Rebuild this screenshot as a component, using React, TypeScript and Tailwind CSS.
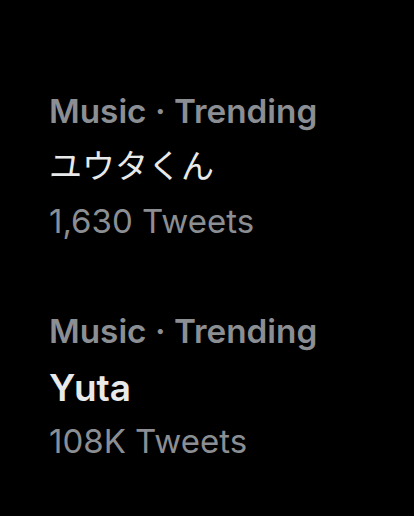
export default function App() {
  const trends = [
    { label: "Music · Trending", title: "ユウタくん", count: "1,630 Tweets", jp: true },
    { label: "Music · Trending", title: "Yuta", count: "108K Tweets", jp: false },
  ];

  return (
    <div className="h-[516px] w-[414px] overflow-hidden bg-black pl-[49px] pt-[84px] font-['Inter','Noto_Sans_CJK_JP',sans-serif]">
      <div className="flex flex-col gap-[55px]">
        {trends.map((t) => (
          <div key={t.title} className="flex flex-col">
            <p className="h-[55px] text-[33.3px] leading-[55px] font-semibold text-[#8b8e93]">
              {t.label}
            </p>
            <p
              className={
                t.jp
                  ? "h-[55px] text-[33px] leading-[55px] font-normal text-[#e7e9ea]"
                  : "h-[55px] text-[37px] leading-[57px] font-semibold text-[#e7e9ea]"
              }
            >
              {t.title}
            </p>
            <p className="h-[55px] text-[33px] leading-[55px] text-[#8b8e93]">{t.count}</p>
          </div>
        ))}
      </div>
    </div>
  );
}
